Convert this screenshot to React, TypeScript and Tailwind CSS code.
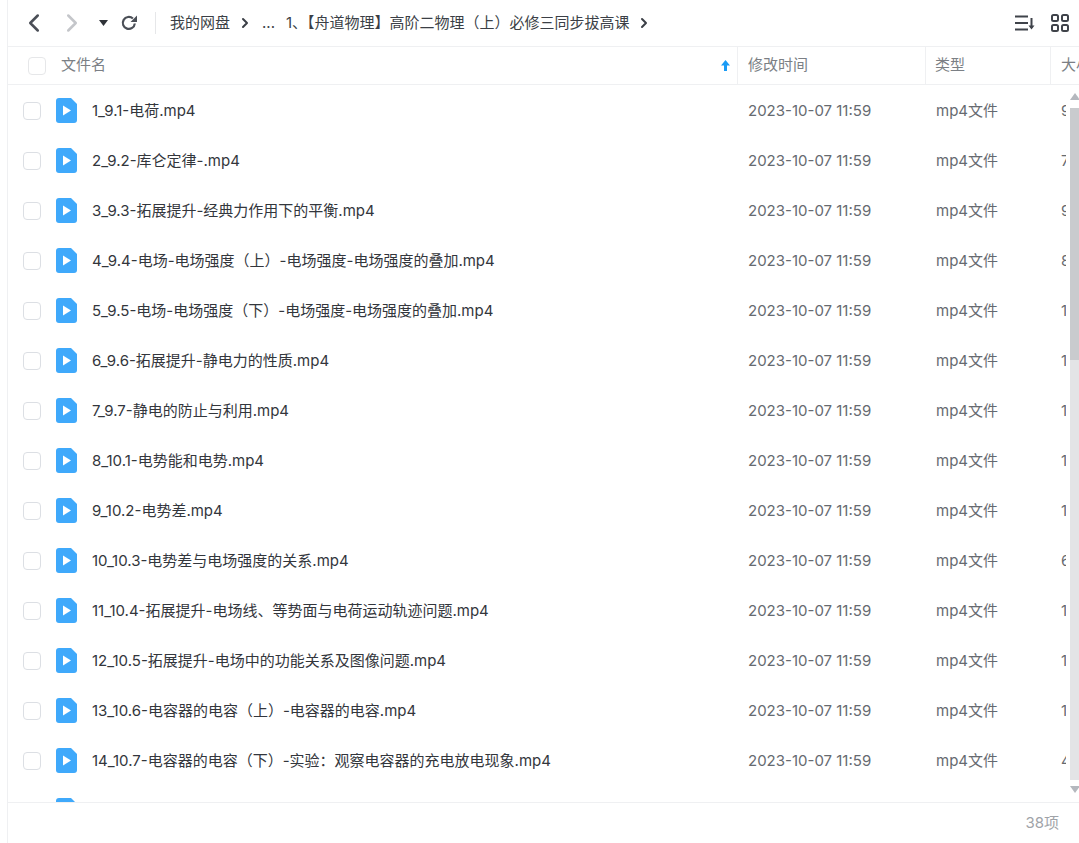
import { ChevronLeft, ChevronRight } from "lucide-react";

const rows = [
  ["1_9.1-电荷.mp4", "9"],
  ["2_9.2-库仑定律-.mp4", "7"],
  ["3_9.3-拓展提升-经典力作用下的平衡.mp4", "9"],
  ["4_9.4-电场-电场强度（上）-电场强度-电场强度的叠加.mp4", "8"],
  ["5_9.5-电场-电场强度（下）-电场强度-电场强度的叠加.mp4", "1"],
  ["6_9.6-拓展提升-静电力的性质.mp4", "1"],
  ["7_9.7-静电的防止与利用.mp4", "1"],
  ["8_10.1-电势能和电势.mp4", "1"],
  ["9_10.2-电势差.mp4", "1"],
  ["10_10.3-电势差与电场强度的关系.mp4", "6"],
  ["11_10.4-拓展提升-电场线、等势面与电荷运动轨迹问题.mp4", "1"],
  ["12_10.5-拓展提升-电场中的功能关系及图像问题.mp4", "1"],
  ["13_10.6-电容器的电容（上）-电容器的电容.mp4", "1"],
  ["14_10.7-电容器的电容（下）-实验：观察电容器的充电放电现象.mp4", "4"],
];

function FileIcon() {
  return (
    <svg width="21" height="25" viewBox="0 0 21 25" className="shrink-0">
      <path d="M3 0h12l6 6v16a3 3 0 0 1-3 3H3a3 3 0 0 1-3-3V3a3 3 0 0 1 3-3z" fill="#3fa9fb" />
      <path d="M7 7.500l8 5-8 5z" fill="#fff" />
    </svg>
  );
}

function Checkbox() {
  return <div className="ml-[15px] h-[18px] w-[18px] shrink-0 rounded-[4px] border border-[#dcdfe4] bg-white" />;
}

function Row({ name, size }: { name: string; size: string }) {
  return (
    <div className="flex h-[50px] shrink-0 items-center">
      <Checkbox />
      <div className="mb-[2px] ml-[15px]">
        <FileIcon />
      </div>
      <div className="ml-[15px] w-[656px] shrink-0 truncate text-[15px] text-[#33363c]">{name}</div>
      <div className="w-[188px] shrink-0 text-[15px] text-[#666a70]">2023-10-07 11:59</div>
      <div className="w-[125px] shrink-0 text-[15px] text-[#666a70]">mp4文件</div>
      <div className="w-[5px] shrink-0 overflow-hidden text-[15px] text-[#666a70]">{size}</div>
    </div>
  );
}

export default function App() {
  return (
    <div className="h-[843px] w-[1079px] overflow-hidden bg-white font-['Inter','Noto_Sans_CJK_SC',sans-serif]">
      <div className="ml-[7px] flex h-full flex-col border-l border-[#eff0f2]">
        {/* toolbar */}
        <div className="flex h-[47px] shrink-0 items-center border-b border-[#eff0f2]">
          <ChevronLeft size={30} strokeWidth={2} className="ml-[11px] text-[#4b4f57]" />
          <ChevronRight size={30} strokeWidth={2} className="ml-[8px] text-[#c4c6ca]" />
          <svg width="9" height="6" viewBox="0 0 9 6" className="ml-[12px]">
            <path d="M0 0h9L4.500 6z" fill="#2f3238" />
          </svg>
          <svg width="18" height="18" viewBox="0 0 18 18" className="ml-[12px]" fill="none">
            <path d="M14.800 9.500a6 6 0 1 1-1.900-5" stroke="#4b4f57" strokeWidth="2.200" />
            <path d="M17 1.500v6.500h-6.500z" fill="#4b4f57" />
          </svg>
          <div className="ml-[17px] h-[22px] w-px bg-[#e6e7e9]" />
          <div className="ml-[14px] text-[15px] text-[#3b3f46]">我的网盘</div>
          <ChevronRight size={16} strokeWidth={3} className="ml-[7px] text-[#3b3f46]" />
          <div className="ml-[9px] text-[15px] text-[#3b3f46]">...</div>
          <div className="ml-[11px] text-[15px] text-[#3b3f46]">1、【舟道物理】高阶二物理（上）必修三同步拔高课</div>
          <ChevronRight size={16} strokeWidth={3} className="ml-[6px] text-[#3b3f46]" />
          <svg width="20" height="16" viewBox="0 0 20 16" className="ml-auto" fill="none">
            <path d="M0 1.500h13M0 8h13M0 14.500h13" stroke="#3f434a" strokeWidth="2" />
            <path d="M16.500 3v10" stroke="#3f434a" strokeWidth="2" />
            <path d="M13.500 10.500h6l-3 4z" fill="#3f434a" />
          </svg>
          <svg width="18" height="18" viewBox="0 0 18 18" className="ml-[16px] mr-[10px]" fill="none" stroke="#3f434a" strokeWidth="2">
            <rect x="1" y="1" width="6" height="6" rx="1.500" />
            <rect x="11" y="1" width="6" height="6" rx="1.500" />
            <rect x="1" y="11" width="6" height="6" rx="1.500" />
            <rect x="11" y="11" width="6" height="6" rx="1.500" />
          </svg>
        </div>
        {/* header */}
        <div className="flex h-[38px] shrink-0 items-center border-b border-[#eff0f2] text-[15px] text-[#7b7f85]">
          <div className="ml-5 h-[18px] w-[18px] shrink-0 rounded-[4px] border border-[#e6e7e9] bg-white" />
          <div className="ml-[15px] flex h-full w-[677px] shrink-0 items-center justify-between border-r border-[#eff0f2] pr-[7px]">
            <span>文件名</span>
            <svg width="9" height="11" viewBox="0 0 9 11">
              <path d="M4.500 0L9 5.500H6V11H3V5.500H0z" fill="#1a9bf5" />
            </svg>
          </div>
          <div className="flex h-full w-[188px] shrink-0 items-center border-r border-[#eff0f2] pl-[10px]">修改时间</div>
          <div className="flex h-full w-[125px] shrink-0 items-center border-r border-[#eff0f2] pl-[9px]">类型</div>
          <div className="whitespace-nowrap pl-[10px]">大小</div>
        </div>
        {/* list */}
        <div className="relative flex-1 overflow-hidden pt-[1px]">
          {rows.map(([name, size]) => (
            <Row key={name} name={name} size={size} />
          ))}
          {/* next row, cut off by the footer */}
          <div className="flex h-[50px] items-center">
            <Checkbox />
            <div className="mb-[2px] ml-[15px]">
              <FileIcon />
            </div>
          </div>
          {/* scrollbar */}
          <div className="absolute right-0 top-0 flex h-full w-[9px] flex-col items-center bg-white">
            <div className="mt-[8px] h-0 w-0 border-x-[5px] border-b-[7px] border-x-transparent border-b-[#b4b8be]" />
            <div className="mt-[8px] h-[252px] w-full shrink-0 bg-[#c9cbce]" />
            <div className="h-[420px] w-full shrink-0 bg-[#e3e4e6]" />
            <div className="mt-[6px] h-0 w-0 border-x-[5px] border-t-[7px] border-x-transparent border-t-[#b4b8be]" />
          </div>
        </div>
        {/* footer */}
        <div className="flex h-[41px] shrink-0 items-center justify-end border-t border-[#eff0f2] pr-[20px] text-[15px] text-[#a0a3a8]">
          38项
        </div>
      </div>
    </div>
  );
}
